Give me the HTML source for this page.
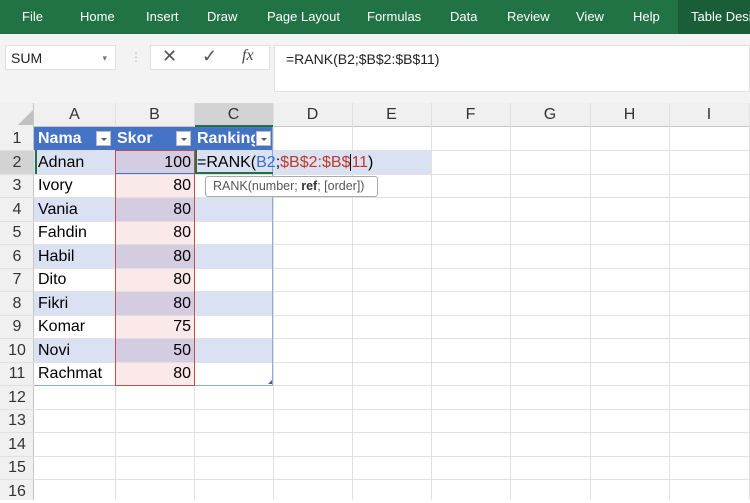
<!DOCTYPE html>
<html><head><meta charset="utf-8"><style>
*{margin:0;padding:0;box-sizing:border-box}
body{width:750px;height:500px;overflow:hidden;background:#fff;font-family:"Liberation Sans",sans-serif;position:relative}
.a{position:absolute}
.rib{left:0;top:0;width:750px;height:34px;background:#217346;color:#fff;font-size:13px;overflow:hidden}
.rib span{position:absolute;top:9px;white-space:nowrap}
.c{position:absolute;font-size:16px;line-height:23px;color:#000;white-space:nowrap}
.hl{position:absolute;background:#e0e0e0}
.rn{position:absolute;left:0;width:34px;text-align:center;font-size:16px;color:#333;line-height:23px}
.ch{position:absolute;top:103px;height:24px;text-align:center;font-size:16px;line-height:24px;color:#333}
.dd{position:absolute;width:15px;height:15px;background:#fff;border:1px solid #bbb}
.dd:after{content:"";position:absolute;left:4px;top:6px;border-left:3px solid transparent;border-right:3px solid transparent;border-top:3px solid #555}
</style></head><body>
<div class="a rib">
<span style="left:22px">File</span><span style="left:80px">Home</span><span style="left:146px">Insert</span><span style="left:207px">Draw</span><span style="left:267px">Page Layout</span><span style="left:367px">Formulas</span><span style="left:450px">Data</span><span style="left:507px">Review</span><span style="left:576px">View</span><span style="left:633px">Help</span>
<div class="a" style="left:678px;top:0;width:72px;height:34px;background:#1a5e38"></div><span style="left:691px">Table Desi</span>
</div>
<div class="a" style="left:0;top:34px;width:750px;height:69px;background:#f3f3f3"></div>
<div class="a" style="left:5px;top:45px;width:111px;height:25px;background:#fff;border:1px solid #e0e0e0;font-size:14px;line-height:24px;padding-left:5px;color:#222">SUM<span style="position:absolute;right:8px;top:0;font-size:9px;color:#777">▾</span></div>
<div class="a" style="left:130px;top:50px;color:#bbb;font-size:12px">⋮</div>
<div class="a" style="left:150px;top:45px;width:120px;height:25px;background:#fff;border:1px solid #e0e0e0"></div>
<div class="a" style="left:162px;top:46px;font-size:18px;color:#555">✕</div>
<div class="a" style="left:202px;top:46px;font-size:18px;color:#555">✓</div>
<div class="a" style="left:242px;top:47px;font-size:16px;font-style:italic;font-family:'Liberation Serif',serif;color:#444">fx</div>
<div class="a" style="left:274px;top:45px;width:476px;height:47px;background:#fff;border:1px solid #e0e0e0;font-size:14px;padding:5px 0 0 11px;color:#222">=RANK(B2;$B$2:$B$11)</div>
<div class="a" style="left:0;top:103px;width:750px;height:24px;background:#f0f0f0;border-bottom:1px solid #c6c6c6"></div>
<div class="a" style="left:194px;top:103px;width:79px;height:24px;background:#d3d3d3;border-bottom:2px solid #217346"></div>
<div class="a" style="left:0;top:103px;width:34px;height:397px;background:#f0f0f0;border-right:1px solid #c6c6c6"></div>
<div class="a" style="left:0;top:150px;width:34px;height:24px;background:#d3d3d3"></div>
<div class="a" style="left:18px;top:110px;border-left:15px solid transparent;border-bottom:15px solid #c0c0c0"></div>
<div class="ch" style="left:34px;width:81px">A</div><div class="ch" style="left:115px;width:79px">B</div><div class="ch" style="left:194px;width:79px">C</div><div class="ch" style="left:273px;width:79px">D</div><div class="ch" style="left:352px;width:79px">E</div><div class="ch" style="left:431px;width:79px">F</div><div class="ch" style="left:510px;width:80px">G</div><div class="ch" style="left:590px;width:79px">H</div><div class="ch" style="left:669px;width:80px">I</div>
<div class="hl" style="left:115px;top:103px;width:1px;height:397px"></div>
<div class="hl" style="left:194px;top:103px;width:1px;height:397px"></div>
<div class="hl" style="left:273px;top:103px;width:1px;height:397px"></div>
<div class="hl" style="left:352px;top:103px;width:1px;height:397px"></div>
<div class="hl" style="left:431px;top:103px;width:1px;height:397px"></div>
<div class="hl" style="left:510px;top:103px;width:1px;height:397px"></div>
<div class="hl" style="left:590px;top:103px;width:1px;height:397px"></div>
<div class="hl" style="left:669px;top:103px;width:1px;height:397px"></div>
<div class="hl" style="left:749px;top:103px;width:1px;height:397px"></div>
<div class="a" style="left:34px;top:127px;width:239px;height:23px;background:#4472c4"></div>
<div class="a" style="left:34px;top:150px;width:81px;height:24px;background:#d9e1f2"></div>
<div class="a" style="left:194px;top:150px;width:237px;height:24px;background:#d9e1f2"></div>
<div class="a" style="left:34px;top:197px;width:81px;height:24px;background:#d9e1f2"></div><div class="a" style="left:194px;top:197px;width:79px;height:24px;background:#d9e1f2"></div>
<div class="a" style="left:34px;top:244px;width:81px;height:24px;background:#d9e1f2"></div><div class="a" style="left:194px;top:244px;width:79px;height:24px;background:#d9e1f2"></div>
<div class="a" style="left:34px;top:291px;width:81px;height:24px;background:#d9e1f2"></div><div class="a" style="left:194px;top:291px;width:79px;height:24px;background:#d9e1f2"></div>
<div class="a" style="left:34px;top:338px;width:81px;height:24px;background:#d9e1f2"></div><div class="a" style="left:194px;top:338px;width:79px;height:24px;background:#d9e1f2"></div>
<div class="a" style="left:115px;top:150px;width:79px;height:235px;background:#fbe9ea"></div>
<div class="a" style="left:115px;top:150px;width:79px;height:24px;background:#d4cce0"></div>
<div class="a" style="left:115px;top:197px;width:79px;height:24px;background:#d4cce0"></div>
<div class="a" style="left:115px;top:244px;width:79px;height:24px;background:#d4cce0"></div>
<div class="a" style="left:115px;top:291px;width:79px;height:24px;background:#d4cce0"></div>
<div class="a" style="left:115px;top:338px;width:79px;height:24px;background:#d4cce0"></div>
<div class="hl" style="left:0;top:150px;width:750px;height:1px"></div>
<div class="hl" style="left:0;top:174px;width:750px;height:1px"></div>
<div class="hl" style="left:0;top:197px;width:750px;height:1px"></div>
<div class="hl" style="left:0;top:221px;width:750px;height:1px"></div>
<div class="hl" style="left:0;top:244px;width:750px;height:1px"></div>
<div class="hl" style="left:0;top:268px;width:750px;height:1px"></div>
<div class="hl" style="left:0;top:291px;width:750px;height:1px"></div>
<div class="hl" style="left:0;top:315px;width:750px;height:1px"></div>
<div class="hl" style="left:0;top:338px;width:750px;height:1px"></div>
<div class="hl" style="left:0;top:362px;width:750px;height:1px"></div>
<div class="hl" style="left:0;top:385px;width:750px;height:1px"></div>
<div class="hl" style="left:0;top:409px;width:750px;height:1px"></div>
<div class="hl" style="left:0;top:432px;width:750px;height:1px"></div>
<div class="hl" style="left:0;top:456px;width:750px;height:1px"></div>
<div class="hl" style="left:0;top:479px;width:750px;height:1px"></div>
<div class="a" style="left:272px;top:127px;width:1px;height:258px;background:#8ea9db"></div>
<div class="a" style="left:34px;top:385px;width:239px;height:1px;background:#8ea9db"></div>
<div class="a" style="left:268px;top:380px;border-left:4px solid transparent;border-bottom:4px solid #3a5ea0"></div>
<div class="a" style="left:115px;top:150px;width:80px;height:236px;border:1px solid #c0504d"></div>
<div class="a" style="left:115px;top:173px;width:80px;height:1px;background:#4472c4"></div>
<div class="a" style="left:35px;top:150px;width:2px;height:24px;background:#217346"></div>
<div class="a" style="left:195px;top:150px;width:78px;height:24px;border-left:2px solid #217346;border-bottom:2px solid #217346"></div>
<div class="rn" style="top:127px">1</div><div class="rn" style="top:151px">2</div><div class="rn" style="top:174px">3</div><div class="rn" style="top:198px">4</div><div class="rn" style="top:221px">5</div><div class="rn" style="top:245px">6</div><div class="rn" style="top:268px">7</div><div class="rn" style="top:292px">8</div><div class="rn" style="top:315px">9</div><div class="rn" style="top:339px">10</div><div class="rn" style="top:362px">11</div><div class="rn" style="top:386px">12</div><div class="rn" style="top:409px">13</div><div class="rn" style="top:433px">14</div><div class="rn" style="top:456px">15</div><div class="rn" style="top:480px">16</div>
<div class="c" style="left:38px;top:127px;color:#fff;font-weight:bold">Nama</div>
<div class="c" style="left:117px;top:127px;color:#fff;font-weight:bold">Skor</div>
<div class="c" style="left:197px;top:127px;color:#fff;font-weight:bold;width:58px;overflow:hidden">Ranking</div>
<div class="dd" style="left:96px;top:131px"></div><div class="dd" style="left:176px;top:131px"></div><div class="dd" style="left:256px;top:131px"></div>
<div class="c" style="left:38px;top:151px">Adnan</div><div class="c" style="left:38px;top:174px">Ivory</div><div class="c" style="left:38px;top:198px">Vania</div><div class="c" style="left:38px;top:221px">Fahdin</div><div class="c" style="left:38px;top:245px">Habil</div><div class="c" style="left:38px;top:268px">Dito</div><div class="c" style="left:38px;top:292px">Fikri</div><div class="c" style="left:38px;top:315px">Komar</div><div class="c" style="left:38px;top:339px">Novi</div><div class="c" style="left:38px;top:362px">Rachmat</div>
<div class="c" style="left:115px;width:76px;text-align:right;top:151px">100</div><div class="c" style="left:115px;width:76px;text-align:right;top:174px">80</div><div class="c" style="left:115px;width:76px;text-align:right;top:198px">80</div><div class="c" style="left:115px;width:76px;text-align:right;top:221px">80</div><div class="c" style="left:115px;width:76px;text-align:right;top:245px">80</div><div class="c" style="left:115px;width:76px;text-align:right;top:268px">80</div><div class="c" style="left:115px;width:76px;text-align:right;top:292px">80</div><div class="c" style="left:115px;width:76px;text-align:right;top:315px">75</div><div class="c" style="left:115px;width:76px;text-align:right;top:339px">50</div><div class="c" style="left:115px;width:76px;text-align:right;top:362px">80</div>
<div class="c" style="left:197px;top:151px">=RANK(<span style="color:#3b6fc4">B2</span>;<span style="color:#c0392b">$B$2:$B$</span><span style="border-left:1px solid #000;color:#c0392b">11</span>)</div>
<div class="a" style="left:205px;top:176px;width:173px;height:21px;background:#fff;border:1px solid #aaa;border-radius:3px;font-size:12.5px;line-height:19px;padding-left:7px;color:#555">RANK(number; <b style="color:#333">ref</b>; [order])</div>
</body></html>
